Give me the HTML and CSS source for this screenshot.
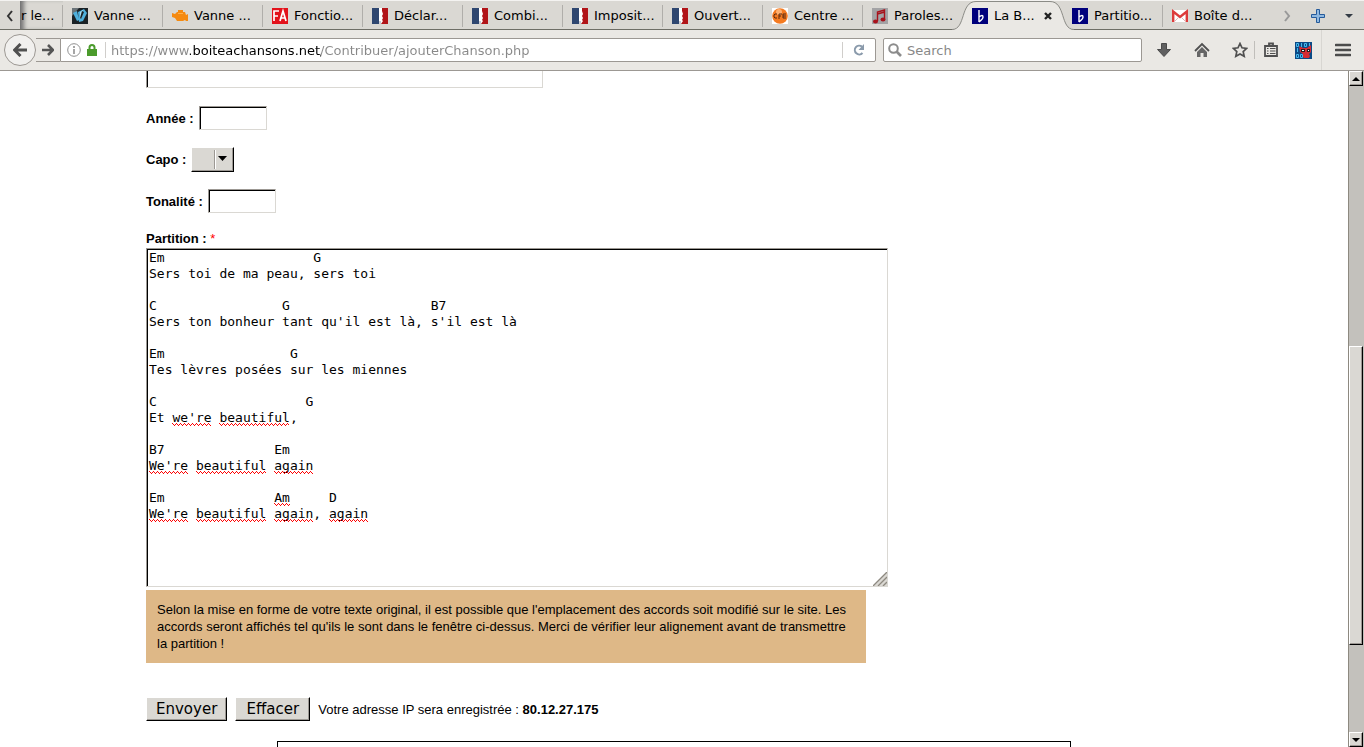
FILE: index.html
```html
<!DOCTYPE html>
<html lang="fr">
<head>
<meta charset="utf-8">
<title>La Boîte à chansons</title>
<link rel="stylesheet" href="styles.css">
</head>
<body>
<svg width="0" height="0" class="defs" aria-hidden="true">
  <symbol id="fr" viewBox="0 0 16 16"><path fill="#fff" d="M0 0h16v16H0z"/><path fill="#2f4770" d="M0 0h7v16H0z"/><path fill="#b11418" d="M10 0h6v16H9l2-3-1-1 1-2-1-2 1-2-1-3z"/><path fill="#c9ccd4" d="M7 13h2v3H7z"/></symbol>
  <symbol id="flat" viewBox="0 0 16 16"><path fill="#00007c" d="M0 0h16v16H0z"/><path d="M7 2v12M7 9q4-3 4 0 0 2-4 5" fill="none" stroke="#fff" stroke-width="1.4"/></symbol>
</svg>
<header class="chrome">
  <nav class="tabbar" aria-label="Onglets">
    <button class="scroll-left" aria-label="Défiler à gauche"><svg width="8" height="12" viewBox="0 0 8 12"><path d="M6 1L2 6l4 5" fill="none" stroke="#333" stroke-width="2"/></svg></button>
    <button class="tab tab-cut">r le...</button>
    <button class="tab"><svg class="fav" viewBox="0 0 16 16"><path fill="#1b2226" d="M0 0h16v16H0z"/><path fill="#6b7478" d="M0 0h7L0 8z"/><path fill="#4fb0dc" d="M1 5l4-2 2 9-2 1zM6 4l6-3 3 4-4 8-4 1z"/><path fill="#a9dff5" d="M8 4l3-2-1 7-2 2z"/><path fill="#1b2226" d="M10 3l2 1-3 7-1-1z"/></svg>Vanne ...</button>
    <button class="tab"><svg class="fav" viewBox="0 0 16 16"><path fill="#f58a10" d="M6 2h5v2h2l1 3 2-1v7h-2l-1-1-2 1H5l-2-3-3-1V5l3 1 2-2h1z"/><path fill="#ffb04a" d="M6 5h5v1H6z"/></svg>Vanne ...</button>
    <button class="tab"><svg class="fav" viewBox="0 0 16 16"><path fill="#e3121b" d="M0 0h16v16H0z"/><path d="M2 13V3h5M2 8h4M8 13l3-10 3 10M9 10h4" fill="none" stroke="#fff" stroke-width="1.7"/></svg>Fonctio...</button>
    <button class="tab"><svg class="fav"><use href="#fr"/></svg>Déclar...</button>
    <button class="tab"><svg class="fav"><use href="#fr"/></svg>Combi...</button>
    <button class="tab"><svg class="fav"><use href="#fr"/></svg>Imposit...</button>
    <button class="tab"><svg class="fav"><use href="#fr"/></svg>Ouvert...</button>
    <button class="tab"><svg class="fav" viewBox="0 0 16 16"><path fill="#fff" d="M0 0h16v16H0z"/><circle cx="8" cy="8" r="7.8" fill="#f47a20"/><circle cx="7" cy="4" r="3" fill="#ffb070"/><path d="M5 6H3L2 7v2l1 1h2M7 11V6h3M7 8h2M14 6h-3v4h3M11 8h3" fill="none" stroke="#5a2a10"/></svg>Centre ...</button>
    <button class="tab tab-before"><svg class="fav" viewBox="0 0 16 16"><path fill="#a3a3a5" d="M0 0h16v16H0z"/><path d="M5.500 13V4l7-2v9M5.500 6l7-2" fill="none" stroke="#a8121b" stroke-width="1.4"/><ellipse cx="3.500" cy="13.500" rx="2.500" ry="2" fill="#a8121b"/><ellipse cx="11" cy="11.500" rx="2.500" ry="2" fill="#a8121b"/></svg>Paroles...</button>
    <button class="tab tab-active" aria-current="page">
      <svg class="tab-shape" viewBox="0 0 122 30"><path d="M0 29.500C14 29.500 8 1.500 24 1.500H98C114 1.500 108 29.500 122 29.500V30H0z" fill="#eae8e4"/><path d="M0 29.500C14 29.500 8 1.500 24 1.500H98C114 1.500 108 29.500 122 29.500" fill="none" stroke="#8b8b86"/></svg>
      <svg class="fav"><use href="#flat"/></svg><span class="tab-label">La B...</span>
      <svg class="close" viewBox="0 0 8 8"><path d="M1 1l6 6M7 1L1 7" stroke="#222" stroke-width="2.400"/></svg>
    </button>
    <button class="tab"><svg class="fav"><use href="#flat"/></svg>Partitio...</button>
    <button class="tab tab-last"><svg class="fav" viewBox="0 0 16 16"><path fill="#fff" d="M0 2h16v12H0z"/><path d="M1.200 14V3.500L8 9l6.800-5.500V14" fill="none" stroke="#dd3c3c" stroke-width="2.400"/><path d="M3 13l4-4M13 13L9 9" stroke="#d8b8b8"/></svg>Boîte d...</button>
    <div class="tab-tools">
      <button aria-label="Défiler à droite"><svg width="8" height="12" viewBox="0 0 8 12"><path d="M2 1l4 5-4 5" fill="none" stroke="#999" stroke-width="2"/></svg></button>
      <button aria-label="Nouvel onglet"><svg width="14" height="14" viewBox="0 0 14 14"><path d="M5.500.500h3v5h5v3h-5v5h-3v-5h-5v-3h5z" fill="#8fb8e0" stroke="#255a9b"/></svg></button>
      <button aria-label="Liste des onglets"><svg width="8" height="4" viewBox="0 0 8 4"><path d="M0 0h8L4 4z" fill="#333b45"/></svg></button>
    </div>
  </nav>
  <div class="toolbar">
    <button class="back" aria-label="Précédent"><svg width="14" height="14" viewBox="0 0 14 14"><path d="M7.500 1l-6 6 6 6M2 7h12" fill="none" stroke="#505050" stroke-width="3"/></svg></button>
    <button class="forward" aria-label="Suivant"><svg width="12" height="12" viewBox="0 0 12 12"><path d="M6 1l5 5-5 5M0 6h10" fill="none" stroke="#555" stroke-width="2.600"/></svg></button>
    <div class="field url">
      <svg class="info" viewBox="0 0 14 14"><circle cx="7" cy="7" r="6.300" fill="none" stroke="#909090"/><path d="M7 3v2M7 6v5" stroke="#909090" stroke-width="1.600"/></svg>
      <svg class="lock" viewBox="0 0 10 12"><path d="M2.500 6V3.500a2.500 2.500 0 0 1 5 0V6" fill="none" stroke="#4b9b2c" stroke-width="2"/><path fill="#4b9b2c" d="M0 5h10v7H0z"/></svg>
      <span class="divider"></span>
      <input class="url-input" aria-label="Adresse" value="https://www.boiteachansons.net/Contribuer/ajouterChanson.php">
      <button class="reload" aria-label="Actualiser"><svg width="12" height="12" viewBox="0 0 12 12"><path d="M9.500 9A4.400 4.400 0 1 1 9 2.600" fill="none" stroke="#8a9aab" stroke-width="2"/><path d="M11 0v6H5.500z" fill="#8a9aab"/></svg></button>
    </div>
    <div class="field search">
      <svg width="14" height="14" viewBox="0 0 14 14"><circle cx="5.500" cy="5.500" r="4.300" fill="none" stroke="#8c8c8c" stroke-width="2"/><path d="M8.500 8.500L13 13" stroke="#8c8c8c" stroke-width="2.600"/></svg>
      <input class="search-input" aria-label="Search" placeholder="Search">
    </div>
    <div class="actions">
      <button aria-label="Téléchargements"><svg width="16" height="16" viewBox="0 0 16 16"><path d="M5.500 1.500h5v6h4L8 14.500l-6.500-7h4z" fill="#606060" stroke="#4a4a4a"/></svg></button>
      <button aria-label="Accueil"><svg width="16" height="16" viewBox="0 0 16 16"><path d="M1 9l7-7 7 7" fill="none" stroke="#505050" stroke-width="1.800"/><path d="M3 10l5-5 5 5v5H9.500v-4h-3v4H3z" fill="#666"/></svg></button>
      <button aria-label="Marque-page"><svg width="16" height="16" viewBox="0 0 16 16"><path d="M8 1.500l2 4.300 4.700.600-3.500 3.200 1 4.700L8 12l-4.200 2.300 1-4.700L1.300 6.400 6 5.800z" fill="none" stroke="#505050" stroke-width="1.700"/></svg></button>
      <button class="list" aria-label="Marque-pages"><svg width="16" height="16" viewBox="0 0 16 16"><path d="M2 4h12v10H2zM6 3V1.500h4V3" fill="none" stroke="#505050" stroke-width="1.800"/><path d="M4 6.500h1.500M7 6.500h5.500M4 9h1.500M7 9h5.500M4 11.500h1.500M7 11.500h5.500" stroke="#505050"/></svg></button>
      <button aria-label="Extension"><svg width="17" height="17" viewBox="0 0 17 17"><path fill="#0c4a86" d="M0 0h17v17H0z"/><path d="M1.500 1.500h2v3h-2zM6.500 1v4M9.500 1.500h2v3h-2zM14.500 1v3M2.500 6v4M1.500 12.500h2v3h-2zM5.500 12.500h2v3h-2z" fill="none" stroke="#45b8ec"/><path fill="#d62b32" d="M4 4l4 2h4l4-3v7l-2 2 1 2-1 2H9l-1-1v-3l-3-2z"/><path fill="#35191c" d="M6 7h4v3H6zM12 7h3v3h-3z"/><path fill="#dff" d="M7 8h2v1H7zM13 8h1v1h-1z"/></svg></button>
      <button class="menu" aria-label="Menu"><svg width="16" height="14" viewBox="0 0 16 14"><path d="M1 2h14M1 7h14M1 12h14" stroke="#4c4c4c" stroke-width="2.600" stroke-linecap="round"/></svg></button>
    </div>
  </div>
</header>
<div class="viewport">
  <main class="page">
    <form class="song">
      <textarea class="sunken previous" aria-label="Champ précédent"></textarea>
      <div class="row"><label for="annee">Année :</label><input id="annee" class="sunken small"></div>
      <div class="row"><label for="capo">Capo :</label><span class="capo"><select id="capo"><option></option></select><svg class="caret" viewBox="0 0 9 5"><path d="M0 0h9L4.500 5z"/></svg></span></div>
      <div class="row"><label for="tonalite">Tonalité :</label><input id="tonalite" class="sunken small"></div>
      <label class="score-label" for="partition">Partition : <span class="required">*</span></label>
      <div class="score">
<textarea id="partition" class="sunken score-text" spellcheck="false">
Em                   G
Sers toi de ma peau, sers toi

C                G                  B7
Sers ton bonheur tant qu'il est là, s'il est là

Em                G
Tes lèvres posées sur les miennes

C                   G
Et we're beautiful,

B7              Em
We're beautiful again

Em              Am     D
We're beautiful again, again</textarea>
        <div class="spelling" aria-hidden="true">
          <i class="r11 c3 w5"></i><i class="r11 c9 w9"></i>
          <i class="r14 c0 w5"></i><i class="r14 c6 w9"></i><i class="r14 c16 w5"></i>
          <i class="r16 c16 w2"></i>
          <i class="r17 c0 w5"></i><i class="r17 c6 w9"></i><i class="r17 c16 w5"></i><i class="r17 c23 w5"></i>
        </div>
        <svg class="grip" viewBox="0 0 14 14"><path d="M14 0v14H0z" fill="#dad8d3"/><path d="M0 14L14 0M5 14l9-9M10 14l4-4" stroke="#8d8980" stroke-width="1.300"/></svg>
      </div>
      <p class="note">Selon la mise en forme de votre texte original, il est possible que l'emplacement des accords soit modifié sur le site. Les accords seront affichés tel qu'ils le sont dans le fenêtre ci-dessus. Merci de vérifier leur alignement avant de transmettre la partition !</p>
      <div class="submit"><button type="submit" class="raised">Envoyer</button><button type="reset" class="raised">Effacer</button><span>Votre adresse IP sera enregistrée : <b>80.12.27.175</b></span></div>
    </form>
    <div class="footer-box"></div>
  </main>
  <div class="scrollbar">
    <button aria-label="Haut"><svg width="8" height="4" viewBox="0 0 8 4"><path d="M0 4h8L4 0z"/></svg></button>
    <div class="track"><div class="thumb"></div></div>
    <button aria-label="Bas"><svg width="8" height="4" viewBox="0 0 8 4"><path d="M0 0h8L4 4z"/></svg></button>
  </div>
</div>
</body>
</html>
```
FILE: styles.css
```css
* { box-sizing: border-box; }
body {
  margin: 0;
  height: 100vh;
  display: flex;
  flex-direction: column;
  overflow: hidden;
  background: #fff;
  color: #000;
  font: 13px/17px "Liberation Sans", Arial, sans-serif;
}
button, input, select, textarea { font: inherit; color: inherit; margin: 0; padding: 0; border: 0; border-radius: 0; background: none; outline: 0; }
svg { flex: none; }
.defs { position: absolute; }

.chrome { flex: none; font: 13px/16px "DejaVu Sans", sans-serif; background: #eae8e4; border-bottom: 1px solid #9c9893; }
.tabbar { display: flex; height: 30px; background: #dad8d3; border-top: 1px solid #f4f3f1; border-bottom: 1px solid #6e6e66; }
.tabbar button { display: flex; align-items: center; white-space: nowrap; padding-top: 2px; }
.scroll-left { width: 20px; justify-content: center; }
.tabbar .tab { position: relative; width: 100px; padding-left: 9px; gap: 6px; }
.tab::after { content: ""; position: absolute; right: 0; top: 4px; bottom: 2px; width: 1px; background: #b0aeaa; }
.tabbar .tab-cut { width: 43px; padding-left: 0; box-shadow: inset 5px 0 4px -2px #777; border-left: 1px solid #777; }
.tab-before::after, .tab-active::after, .tab-last::after { display: none; }
.fav { width: 16px; height: 16px; }
.tab-shape { position: absolute; left: -11px; top: -1px; width: 122px; height: 30px; }
.tab-active .fav, .tab-label, .close { position: relative; }
.tab-active { z-index: 1; }
.close { width: 8px; height: 8px; margin-left: auto; margin-right: 11px; }
.tab-tools { margin-left: auto; display: flex; gap: 20px; padding-right: 11px; }

.toolbar { display: flex; align-items: center; height: 40px; padding-right: 13px; }
.toolbar button { display: flex; align-items: center; justify-content: center; flex: none; }
.back { position: relative; width: 32px; height: 32px; margin-left: 4px; border: 1px solid #9c9893; border-radius: 50%; background: #f1f0ee; }
.forward { width: 24px; height: 24px; border: 1px solid #9c9893; border-width: 1px 0; }
.field { display: flex; align-items: center; height: 24px; background: #fff; border: 1px solid #9c9893; border-radius: 0 2px 2px 0; }
.url { flex: 1; min-width: 0; padding-left: 6px; }
.info { width: 14px; height: 14px; }
.lock { width: 10px; height: 12px; margin-left: 6px; }
.divider { width: 1px; height: 16px; margin: 0 5px 0 8px; background: #d0cecb; }
.url-input {
  flex: 1;
  min-width: 0;
  height: 18px;
  padding-top: 1px;
  background: linear-gradient(90deg, #888 79px, #000 79px, #000 210px, #888 210px);
  background-clip: text;
  -webkit-text-fill-color: transparent;
}
.reload { width: 33px; height: 16px; border-left: 1px solid #d0cecb; }
.search { width: 259px; margin-left: 7px; padding-left: 4px; border-radius: 2px; }
.search-input { flex: 1; min-width: 0; height: 18px; padding-top: 1px; margin-left: 5px; }
.search-input::placeholder { color: #888; opacity: 1; }
.actions { display: flex; align-items: center; align-self: stretch; margin-left: 14px; gap: 22px; }
.actions .list { height: 18px; margin-left: -16px; padding-left: 8px; border-left: 1px solid #c0beba; }
.actions .list + button { margin-left: -6px; }
.actions .menu { align-self: stretch; margin-left: -13px; padding-left: 13px; border-left: 1px solid #d8d6d2; }

.viewport { flex: 1; min-height: 0; display: flex; }
.page { flex: 1; min-width: 0; overflow: hidden; }
.song { max-width: 1056px; margin: 0 auto; }
.sunken { display: block; border: 1px solid; border-color: #9c9893 #dad8d3 #dad8d3 #9c9893; box-shadow: inset 1px 1px #000; background: #fff; }
.previous { width: 397px; height: 17px; border-top: 0; box-shadow: inset 1px 0 #000; resize: none; margin-bottom: 18px; }
.row { display: flex; align-items: center; gap: 5px; font-weight: bold; }
.small { width: 68px; height: 24px; }
.capo { position: relative; margin: 17px 0; }
.capo select {
  display: block;
  appearance: none;
  width: 43px;
  height: 25px;
  background: linear-gradient(90deg, #9c9893 1px, #fff 1px) 22px 2px / 2px 19px no-repeat #dad8d3;
  border: 1px solid;
  border-color: #fff #000 #000 #fff;
  box-shadow: inset -1px -1px #9c9893;
}
.caret { position: absolute; right: 7px; top: 9px; width: 9px; height: 5px; pointer-events: none; }
.score-label { display: block; margin-top: 17px; font-weight: bold; }
.required { color: #f00; font-weight: normal; }
.score { position: relative; width: 742px; margin-top: 1px; font: 13px/16px "DejaVu Sans Mono", monospace; }
.score-text { width: 100%; height: 339px; padding: 1px 2px; resize: none; overflow: hidden; white-space: pre; }
.spelling { --dot: linear-gradient(90deg, #f00 1px, transparent 1px); position: absolute; left: 3px; top: 2px; pointer-events: none; }
.spelling i {
  position: absolute;
  left: round(var(--c) * 1ch, 1px);
  top: calc(var(--r) * 16px - 3px);
  width: round(var(--w) * 1ch, 1px);
  height: 3px;
  background: var(--dot) 0 0, var(--dot) 1px 1px, var(--dot) 3px 1px, var(--dot) 2px 2px;
  background-size: 4px 1px;
  background-repeat: repeat-x;
}
.r11 { --r: 11; } .r14 { --r: 14; } .r16 { --r: 16; } .r17 { --r: 17; }
.c0 { --c: 0; } .c3 { --c: 3; } .c6 { --c: 6; } .c9 { --c: 9; } .c16 { --c: 16; } .c23 { --c: 23; }
.w2 { --w: 2; } .w5 { --w: 5; } .w9 { --w: 9; }
.grip { position: absolute; right: 1px; bottom: 1px; width: 14px; height: 14px; }
.note { max-width: 720px; margin: 3px 0 34px; padding: 11px; background: #deb887; }
.submit { display: flex; align-items: center; gap: 8px; }
.raised { min-width: 75px; padding: 0 9px; height: 24px; font: 15px/20px "DejaVu Sans", sans-serif; background: #dad8d3; border: 1px solid; border-color: #fff #000 #000 #fff; box-shadow: inset -1px -1px #9c9893; }
.footer-box { max-width: 794px; height: 40px; margin: 20px auto 0; border: 1px solid #000; }

.scrollbar { flex: none; width: 16px; display: flex; flex-direction: column; border-left: 1px solid #8d8980; background: #c3c1bc; padding-right: 1px; }
.scrollbar button, .thumb { background: #dad8d3; border: 1px solid; border-color: #fff #000 #000 #fff; box-shadow: inset -1px -1px #9c9893; }
.scrollbar button { flex: none; height: 15px; display: flex; align-items: center; justify-content: center; }
.track { flex: 1; display: flex; flex-direction: column; }
.track::before { content: ""; flex: 261; }
.thumb { flex: 298; }
.track::after { content: ""; flex: 87; }
```
